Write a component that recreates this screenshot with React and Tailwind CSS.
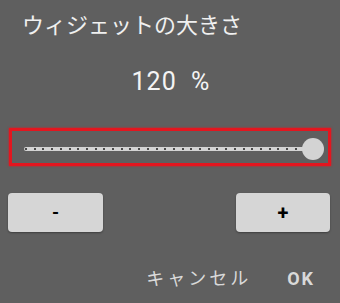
import React from "react";

const ticks = Array.from({ length: 34 }, (_, i) => i);

const App = () => {
  return (
    <div
      className="w-[340px] h-[303px] bg-[#5f5f5f] relative overflow-hidden"
      style={{ fontFamily: "Roboto, 'Noto Sans CJK JP', sans-serif" }}
    >
      <div className="pt-[11px] pl-[22px] text-[22px] leading-[30px] text-[#f0f0f0]">
        ウィジェットの大きさ
      </div>

      <div className="mt-[26px] text-center text-[25px] leading-[30px] text-[#f4f4f4] tracking-[1px] pl-[2px]">
        120&nbsp;&nbsp;%
      </div>

      <div className="mt-[31px] mx-[9px] h-[38px] border-[3px] border-[#e3161f] shadow-[0_0_2px_#e3161f] relative">
        <div className="absolute left-[12px] w-[290px] top-[16px] h-[4px] bg-[#d3d3d3] rounded-full">
          {ticks.map((i) => (
            <span
              key={i}
              className="absolute top-[1px] w-[2px] h-[2px] bg-[#4a4a4a]"
              style={{ left: `${1 + i * 8.7}px` }}
            />
          ))}
        </div>
        <div className="absolute left-[290px] top-[7px] w-[22px] h-[22px] rounded-full bg-[#d3d3d3]" />
      </div>

      <div className="mt-[27px] flex justify-between px-[8px] pr-[10px]">
        <button className="w-[95px] h-[39px] bg-[#d6d6d6] rounded-[4px] shadow-[0_1px_2px_rgba(0,0,0,0.35)] text-[18px] font-bold text-black">
          -
        </button>
        <button className="w-[94px] h-[39px] bg-[#d6d6d6] rounded-[4px] shadow-[0_1px_2px_rgba(0,0,0,0.35)] text-[20px] font-bold text-black">
          +
        </button>
      </div>

      <div className="mt-[35px] flex justify-end items-center pr-[25px] text-[#d9d9d9]">
        <span className="text-[18px] tracking-[3px] leading-[24px]">キャンセル</span>
        <span className="ml-[36px] text-[18px] font-bold tracking-[2px] leading-[24px]">OK</span>
      </div>
    </div>
  );
};

export default App;
